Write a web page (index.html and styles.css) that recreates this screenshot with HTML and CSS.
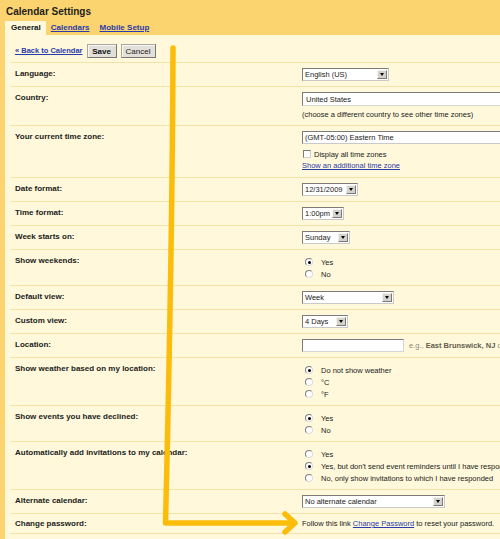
FILE: index.html
```html
<!DOCTYPE html>
<html>
<head>
<meta charset="utf-8">
<title>Calendar Settings</title>
<link rel="stylesheet" href="styles.css">
</head>
<body>
<div class="page">
  <div class="title">Calendar Settings</div>
  <div class="tabs">
    <span class="tab tab-active">General</span>
    <a class="tab" href="#">Calendars</a>
    <a class="tab" href="#">Mobile Setup</a>
  </div>
  <div class="panel">
    <div class="toolbar">
      <a class="back" href="#">« Back to Calendar</a>
      <button class="btn btn-save">Save</button>
      <button class="btn btn-cancel">Cancel</button>
    </div>

    <div class="row">
      <div class="label">Language:</div>
      <div class="value"><span class="sel sel-lang"><span class="sel-text">English (US)</span><span class="sel-btn"></span></span></div>
    </div>

    <div class="row">
      <div class="label">Country:</div>
      <div class="value">
        <div class="field field-country">United States</div>
        <div class="help">(choose a different country to see other time zones)</div>
      </div>
    </div>

    <div class="row">
      <div class="label">Your current time zone:</div>
      <div class="value">
        <span class="sel sel-tz"><span class="sel-text">(GMT-05:00) Eastern Time</span><span class="sel-btn"></span></span>
        <div class="check-line"><span class="check"></span>Display all time zones</div>
        <div class="link-line"><a href="#">Show an additional time zone</a></div>
      </div>
    </div>

    <div class="row">
      <div class="label">Date format:</div>
      <div class="value"><span class="sel sel-date"><span class="sel-text">12/31/2009</span><span class="sel-btn"></span></span></div>
    </div>

    <div class="row">
      <div class="label">Time format:</div>
      <div class="value"><span class="sel sel-time"><span class="sel-text">1:00pm</span><span class="sel-btn"></span></span></div>
    </div>

    <div class="row">
      <div class="label">Week starts on:</div>
      <div class="value"><span class="sel sel-week"><span class="sel-text">Sunday</span><span class="sel-btn"></span></span></div>
    </div>

    <div class="row">
      <div class="label">Show weekends:</div>
      <div class="value radios">
        <div class="radio-line"><span class="radio radio-on"></span>Yes</div>
        <div class="radio-line"><span class="radio"></span>No</div>
      </div>
    </div>

    <div class="row">
      <div class="label">Default view:</div>
      <div class="value"><span class="sel sel-view"><span class="sel-text">Week</span><span class="sel-btn"></span></span></div>
    </div>

    <div class="row">
      <div class="label">Custom view:</div>
      <div class="value"><span class="sel sel-custom"><span class="sel-text">4 Days</span><span class="sel-btn"></span></span></div>
    </div>

    <div class="row">
      <div class="label">Location:</div>
      <div class="value inline">
        <span class="field field-loc"></span>
        <span class="hint">e.g., <b>East Brunswick, NJ</b> or 08816</span>
      </div>
    </div>

    <div class="row">
      <div class="label">Show weather based on my location:</div>
      <div class="value radios">
        <div class="radio-line"><span class="radio radio-on"></span>Do not show weather</div>
        <div class="radio-line"><span class="radio"></span>°C</div>
        <div class="radio-line"><span class="radio"></span>°F</div>
      </div>
    </div>

    <div class="row">
      <div class="label">Show events you have declined:</div>
      <div class="value radios">
        <div class="radio-line"><span class="radio radio-on"></span>Yes</div>
        <div class="radio-line"><span class="radio"></span>No</div>
      </div>
    </div>

    <div class="row">
      <div class="label">Automatically add invitations to my calendar:</div>
      <div class="value radios">
        <div class="radio-line"><span class="radio"></span>Yes</div>
        <div class="radio-line"><span class="radio radio-on"></span>Yes, but don't send event reminders until I have responded</div>
        <div class="radio-line"><span class="radio"></span>No, only show invitations to which I have responded</div>
      </div>
    </div>

    <div class="row">
      <div class="label">Alternate calendar:</div>
      <div class="value"><span class="sel sel-alt"><span class="sel-text">No alternate calendar</span><span class="sel-btn"></span></span></div>
    </div>

    <div class="row row-short">
      <div class="label">Change password:</div>
      <div class="value text-line">Follow this link <a href="#">Change Password</a> to reset your password.</div>
    </div>
  </div>
</div>

<svg class="arrow" width="500" height="539" viewBox="0 0 500 539">
  <path d="M173 48 C172.5 200 169 380 165.5 523 L292 523" fill="none" stroke="#fbbd0a" stroke-width="5.5" stroke-linecap="round" stroke-linejoin="round"/>
  <path d="M285 514 L295 523 L285 532" fill="none" stroke="#fbbd0a" stroke-width="5.5" stroke-linecap="round" stroke-linejoin="round"/>
</svg>
</body>
</html>
```

FILE: styles.css
```css
html, body {
  margin: 0;
  padding: 0;
}
body {
  width: 500px;
  height: 539px;
  overflow: hidden;
  background: #fbd470;
  font-family: "Liberation Sans", Arial, sans-serif;
  color: #222;
  position: relative;
}
a {
  color: #2a3bab;
  text-decoration: underline;
}
.page {
  width: 500px;
}
.title {
  padding: 6px 0 0 6px;
  height: 12px;
  line-height: 12px;
  font-size: 10px;
  font-weight: bold;
  color: #1e1e1e;
  margin-bottom: 3px;
}
.tabs {
  display: flex;
  height: 14px;
  margin-left: 5px;
  font-size: 8px;
  font-weight: bold;
  line-height: 14px;
}
.tab {
  padding: 0 5px 0 5px;
}
.tab-active {
  background: #fff8da;
  color: #111;
  padding: 0 5px 0 6px;
}
.panel {
  margin-left: 5px;
  background: #fff8da;
  height: 504px;
  overflow: hidden;
}
.toolbar {
  margin-left: 5px;
  padding: 9px 0 4px 5px;
  display: flex;
  align-items: center;
  gap: 4px;
  border-bottom: 1px solid #f6e2a6;
}
.back {
  font-size: 7.5px;
  font-weight: bold;
  line-height: 12px;
}
.btn {
  box-sizing: border-box;
  height: 14px;
  padding: 0;
  margin: 0;
  font-family: "Liberation Sans", Arial, sans-serif;
  font-size: 8px;
  color: #222;
  background: #e2e0d8;
  border: 1px solid #a9a89f;
  border-right-color: #77766f;
  border-bottom-color: #77766f;
  box-shadow: inset 1px 1px 0 #f8f8f4;
}
.btn-save {
  width: 30px;
  font-weight: bold;
  color: #111;
}
.btn-cancel {
  width: 35px;
}
.row {
  margin-left: 5px;
  padding: 5px 0 5px 5px;
  display: grid;
  grid-template-columns: 287px minmax(0, 1fr);
  border-bottom: 1px solid #f6e2a6;
}
.row-short {
  padding: 4px 0 3px 5px;
}
.label {
  font-size: 8px;
  font-weight: bold;
  line-height: 12px;
  color: #1c1c1c;
  white-space: nowrap;
}
.value {
  font-size: 7.5px;
  white-space: nowrap;
  color: #222;
  overflow: hidden;
}
.inline {
  display: flex;
  align-items: center;
}
.sel {
  box-sizing: border-box;
  display: flex;
  align-items: center;
  height: 13px;
  border: 1px solid #7b7b7b;
  border-right-color: #c9c9c9;
  border-bottom-color: #c9c9c9;
  background: #fff;
  font-size: 7.5px;
  line-height: 11px;
}
.sel-text {
  flex: 1;
  padding-left: 2px;
  overflow: hidden;
}
.sel-btn {
  box-sizing: border-box;
  width: 10px;
  height: 9px;
  margin-right: 1px;
  background: #d6d3cc;
  border: 1px solid #f4f3ef;
  border-right-color: #7a7974;
  border-bottom-color: #7a7974;
  display: flex;
  align-items: center;
  justify-content: center;
}
.sel-btn::after {
  content: "";
  width: 0;
  height: 0;
  border-left: 2.5px solid transparent;
  border-right: 2.5px solid transparent;
  border-top: 3px solid #000;
}
.sel-lang { width: 87px; }
.sel-tz { width: 260px; }
.sel-date { width: 56px; }
.sel-time { width: 42px; }
.sel-week { width: 48px; }
.sel-view { width: 92px; }
.sel-custom { width: 46px; }
.sel-alt { width: 143px; }
.field {
  box-sizing: border-box;
  display: flex;
  align-items: center;
  height: 14px;
  padding-left: 3px;
  background: #fff;
  border: 1px solid #7b7b7b;
  border-right-color: #d4d4d4;
  border-bottom-color: #d4d4d4;
  font-size: 7.5px;
}
.field-country { width: 260px; }
.field-loc {
  flex: none;
  width: 102px;
  height: 13px;
}
.hint {
  margin-left: 5px;
  color: #8a8a80;
  font-size: 7.5px;
}
.hint b {
  color: #5f5f4e;
}
.help {
  margin-top: 3px;
  line-height: 11px;
}
.check-line {
  margin-top: 4px;
  height: 12px;
  display: flex;
  align-items: center;
}
.check {
  box-sizing: border-box;
  width: 8px;
  height: 8px;
  margin: 0 3px 0 1px;
  background: #fff;
  border: 1px solid #7b7b7b;
  border-right-color: #cfcfcf;
  border-bottom-color: #cfcfcf;
}
.link-line {
  height: 12px;
  line-height: 12px;
}
.radios {
  padding-top: 1px;
}
.radio-line {
  height: 12px;
  display: flex;
  align-items: center;
}
.radio {
  box-sizing: border-box;
  position: relative;
  flex: none;
  width: 8px;
  height: 8px;
  margin: 0 8px 0 3px;
  border-radius: 50%;
  background: #fff;
  border: 1px solid #808080;
  border-right-color: #dcdcdc;
  border-bottom-color: #dcdcdc;
}
.radio-on::after {
  content: "";
  position: absolute;
  left: 1.5px;
  top: 1.5px;
  width: 3px;
  height: 3px;
  border-radius: 50%;
  background: #000;
}
.text-line {
  line-height: 12px;
}
.arrow {
  position: absolute;
  left: 0;
  top: 0;
  pointer-events: none;
}
```
